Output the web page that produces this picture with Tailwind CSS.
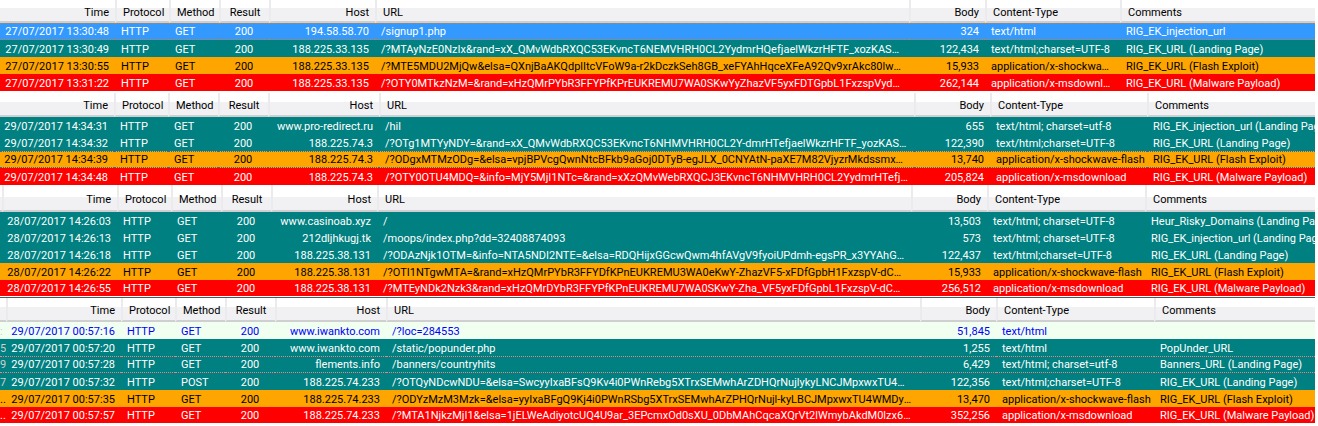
<!DOCTYPE html>
<html lang="en">
<head>
    <meta charset="UTF-8">
    <title>Sessions</title>
    <script src="https://cdn.jsdelivr.net/npm/@tailwindcss/browser@4"></script>
</head>
<body class="bg-white w-[1318px] h-[426px] overflow-hidden font-['Roboto',sans-serif] text-[11px] leading-[17px]">
    <div class="w-[1315px] flex flex-col [&_table]:w-[1315px] [&_table]:table-fixed [&_table]:border-separate [&_table]:border-spacing-0 [&_th]:px-[6px] [&_th]:pt-[3px] [&_th]:font-normal [&_th]:text-left [&_th]:border-b-2 [&_th]:border-b-[#cfcfd2] [&_th]:border-l-2 [&_th]:border-l-[#ebebed] [&_th]:bg-linear-to-t [&_th]:from-[#f1f1f3] [&_th]:from-[13px] [&_th]:to-white [&_th]:to-[13px] [&_td]:h-[17px] [&_td]:p-0 [&_td]:pt-[2px] [&_td]:pl-[6px] [&_td]:pr-[6px] [&_td]:leading-[15px] [&_td]:truncate [&_td.r]:pl-0 [&_td.r]:text-right [&_td.c]:text-center [&_th.r]:text-right [&_th.c]:text-center [&_td:last-child]:pr-0 [&_td:last-child]:[text-overflow:clip] [&_th.e]:p-0 [&_th.e]:border-l-0 [&_td.e]:px-0 [&_td.e]:text-[#cfcfcf]">

        <!-- first capture -->
        <table>
            <colgroup>
                <col class="w-[115px]"><col class="w-[54px]"><col class="w-[50px]"><col class="w-[50px]"><col class="w-[106px]"><col class="w-[534px]"><col class="w-[76px]"><col class="w-[135px]"><col class="w-[195px]">
            </colgroup>
            <thead>
                <tr class="h-[23px]">
                    <th class="r !border-l-0">Time</th><th>Protocol</th><th>Method</th><th class="c">Result</th><th class="r">Host</th><th>URL</th><th class="r">Body</th><th>Content-Type</th><th>Comments</th>
                </tr>
            </thead>
            <tbody>
                <tr class="bg-[#3399ff] text-white [&_td]:border-y [&_td]:border-dotted [&_td]:border-[#c08040] [&_td]:!pt-px [&_td]:!leading-[14px]"><td class="r">27/07/2017 13:30:48</td><td>HTTP</td><td>GET</td><td class="c">200</td><td class="r">194.58.58.70</td><td>/signup1.php</td><td class="r">324</td><td>text/html</td><td>RIG_EK_injection_url</td></tr>
                <tr class="bg-[#008080] text-white"><td class="r">27/07/2017 13:30:49</td><td>HTTP</td><td>GET</td><td class="c">200</td><td class="r">188.225.33.135</td><td>/?MTAyNzE0NzIx&amp;rand=xX_QMvWdbRXQC53EKvncT6NEMVHRH0CL2YydmrHQefjaelWkzrHFTF_xozKASAS3DkT1aaD3kT1</td><td class="r">122,434</td><td>text/html;charset=UTF-8</td><td>RIG_EK_URL (Landing Page)</td></tr>
                <tr class="bg-[#ffa500] text-black"><td class="r">27/07/2017 13:30:55</td><td>HTTP</td><td>GET</td><td class="c">200</td><td class="r">188.225.33.135</td><td>/?MTE5MDU2MjQw&amp;elsa=QXnjBaAKQdplItcVFoW9a-r2kDczkSeh8GB_xeFYAhHqceXFeA92Qv9xrAkc80lwphD3kT1aaD3kT1</td><td class="r">15,933</td><td>application/x-shockwave-flash</td><td>RIG_EK_URL (Flash Exploit)</td></tr>
                <tr class="bg-[#ff0000] text-white"><td class="r">27/07/2017 13:31:22</td><td>HTTP</td><td>GET</td><td class="c">200</td><td class="r">188.225.33.135</td><td>/?OTY0MTkzNzM=&amp;rand=xHzQMrPYbR3FFYPfKPrEUKREMU7WA0SKwYyZhazVF5yxFDTGpbL1FxzspVydCF-D3kT1aaD3kT1aa</td><td class="r">262,144</td><td>application/x-msdownload</td><td>RIG_EK_URL (Malware Payload)</td></tr>
            </tbody>
        </table>

        <!-- second capture -->
        <table class="mt-[2px] [&_td:nth-last-child(2)]:pr-0">
            <colgroup>
                <col class="w-[114px]"><col class="w-[54px]"><col class="w-[50px]"><col class="w-[50px]"><col class="w-[111px]"><col class="w-[535px]"><col class="w-[76px]"><col class="w-[157px]"><col class="w-[168px]">
            </colgroup>
            <thead>
                <tr class="h-[24px]">
                    <th class="r !border-l-0">Time</th><th>Protocol</th><th>Method</th><th class="c">Result</th><th class="r">Host</th><th>URL</th><th class="r">Body</th><th>Content-Type</th><th>Comments</th>
                </tr>
            </thead>
            <tbody>
                <tr class="bg-[#008080] text-white"><td class="r">29/07/2017 14:34:31</td><td>HTTP</td><td>GET</td><td class="c">200</td><td class="r">www.pro-redirect.ru</td><td>/hil</td><td class="r">655</td><td>text/html; charset=utf-8</td><td>RIG_EK_injection_url (Landing Page)</td></tr>
                <tr class="bg-[#008080] text-white"><td class="r">29/07/2017 14:34:32</td><td>HTTP</td><td>GET</td><td class="c">200</td><td class="r">188.225.74.3</td><td>/?OTg1MTYyNDY=&amp;rand=xX_QMvWdbRXQC53EKvncT6NHMVHRH0CL2Y-dmrHTefjaelWkzrHFTF_yozKASwD3kT1aaD3kT1aa</td><td class="r">122,390</td><td>text/html;charset=UTF-8</td><td>RIG_EK_URL (Landing Page)</td></tr>
                <tr class="bg-[#ffa500] text-black [&_td]:border-y [&_td]:border-dotted [&_td]:border-[#3366aa] [&_td]:!pt-px [&_td]:!leading-[14px]"><td class="r">29/07/2017 14:34:39</td><td>HTTP</td><td>GET</td><td class="c">200</td><td class="r">188.225.74.3</td><td>/?ODgxMTMzODg=&amp;elsa=vpjBPVcgQwnNtcBFkb9aGoj0DTyB-egJLX_0CNYAtN-paXE7M82VjyzrMkdssmxxOaD3kT1aaD3kT1</td><td class="r">13,740</td><td>application/x-shockwave-flash</td><td>RIG_EK_URL (Flash Exploit)</td></tr>
                <tr class="bg-[#ff0000] text-white"><td class="r">29/07/2017 14:34:48</td><td>HTTP</td><td>GET</td><td class="c">200</td><td class="r">188.225.74.3</td><td>/?OTY0OTU4MDQ=&amp;info=MjY5MjI1NTc=&amp;rand=xXzQMvWebRXQCJ3EKvncT6NHMVHRH0CL2YydmrHTefjaelWkzrHFD3kT1aaD3kT1aa</td><td class="r">205,824</td><td>application/x-msdownload</td><td>RIG_EK_URL (Malware Payload)</td></tr>
            </tbody>
        </table>

        <!-- third capture -->
        <table class="[&_td:nth-last-child(2)]:pr-0 [&_th]:!pt-[4px]">
            <colgroup>
                <col class="w-[2px]"><col class="w-[115px]"><col class="w-[54px]"><col class="w-[50px]"><col class="w-[50px]"><col class="w-[106px]"><col class="w-[534px]"><col class="w-[76px]"><col class="w-[158px]"><col class="w-[170px]">
            </colgroup>
            <thead>
                <tr class="h-[27px]">
                    <th class="e"></th><th class="r">Time</th><th>Protocol</th><th>Method</th><th class="c">Result</th><th class="r">Host</th><th>URL</th><th class="r">Body</th><th>Content-Type</th><th>Comments</th>
                </tr>
            </thead>
            <tbody>
                <tr class="bg-[#008080] text-white"><td class="e"></td><td class="r">28/07/2017 14:26:03</td><td>HTTP</td><td>GET</td><td class="c">200</td><td class="r">www.casinoab.xyz</td><td>/</td><td class="r">13,503</td><td>text/html; charset=UTF-8</td><td>Heur_Risky_Domains (Landing Page)</td></tr>
                <tr class="bg-[#008080] text-white"><td class="e"></td><td class="r">28/07/2017 14:26:13</td><td>HTTP</td><td>GET</td><td class="c">200</td><td class="r">212dljhkugj.tk</td><td>/moops/index.php?dd=32408874093</td><td class="r">573</td><td>text/html; charset=UTF-8</td><td>RIG_EK_injection_url (Landing Page)</td></tr>
                <tr class="bg-[#008080] text-white"><td class="e"></td><td class="r">28/07/2017 14:26:18</td><td>HTTP</td><td>GET</td><td class="c">200</td><td class="r">188.225.38.131</td><td>/?ODAzNjk1OTM=&amp;info=NTA5NDI2NTE=&amp;elsa=RDQHijxGGcwQwm4hfAVgV9fyoiUPdmh-egsPR_x3YYAhG9kT1aaD3kT1aa</td><td class="r">122,437</td><td>text/html;charset=UTF-8</td><td>RIG_EK_URL (Landing Page)</td></tr>
                <tr class="bg-[#ffa500] text-black"><td class="e"></td><td class="r">28/07/2017 14:26:22</td><td>HTTP</td><td>GET</td><td class="c">200</td><td class="r">188.225.38.131</td><td>/?OTI1NTgwMTA=&amp;rand=xHzQMrPYbR3FFYDfKPnEUKREMU3WA0eKwY-ZhazVF5-xFDfGpbH1FxzspV-dCF-D3kT1aaD3kT1aa</td><td class="r">15,933</td><td>application/x-shockwave-flash</td><td>RIG_EK_URL (Flash Exploit)</td></tr>
                <tr class="bg-[#ff0000] text-white [&_td]:border-b [&_td]:border-b-white [&_td]:!leading-[14px]"><td class="e"></td><td class="r">28/07/2017 14:26:55</td><td>HTTP</td><td>GET</td><td class="c">200</td><td class="r">188.225.38.131</td><td>/?MTEyNDk2Nzk3&amp;rand=xHzQMrDYbR3FFYPfKPnEUKREMU7WA0SKwY-Zha_VF5yxFDfGpbL1FxzspV-dCFyD3kT1aaD3kT1aa</td><td class="r">256,512</td><td>application/x-msdownload</td><td>RIG_EK_URL (Malware Payload)</td></tr>
            </tbody>
        </table>
        <div class="h-px bg-[#555555]"></div>

        <!-- fourth capture -->
        <table class="[&_td:nth-last-child(2)]:pr-0">
            <colgroup>
                <col class="w-[6px]"><col class="w-[115px]"><col class="w-[54px]"><col class="w-[50px]"><col class="w-[50px]"><col class="w-[111px]"><col class="w-[534px]"><col class="w-[76px]"><col class="w-[158px]"><col class="w-[161px]">
            </colgroup>
            <thead>
                <tr class="h-[24px]">
                    <th class="e"></th><th class="r">Time</th><th>Protocol</th><th>Method</th><th class="c">Result</th><th class="r">Host</th><th>URL</th><th class="r">Body</th><th>Content-Type</th><th>Comments</th>
                </tr>
            </thead>
            <tbody>
                <tr class="bg-[#f0fff0] text-[#0000ff]"><td class="e">:</td><td class="r">29/07/2017 00:57:16</td><td>HTTP</td><td>GET</td><td class="c">200</td><td class="r">www.iwankto.com</td><td>/?loc=284553</td><td class="r">51,845</td><td>text/html</td><td></td></tr>
                <tr class="bg-[#008080] text-white"><td class="e">5</td><td class="r">29/07/2017 00:57:20</td><td>HTTP</td><td>GET</td><td class="c">200</td><td class="r">www.iwankto.com</td><td>/static/popunder.php</td><td class="r">1,255</td><td>text/html</td><td>PopUnder_URL</td></tr>
                <tr class="bg-[#008080] text-white [&_td]:border-y [&_td]:border-dotted [&_td]:border-[#f08080] [&_td]:!pt-px [&_td]:!leading-[14px]"><td class="e">9</td><td class="r">29/07/2017 00:57:28</td><td>HTTP</td><td>GET</td><td class="c">200</td><td class="r">flements.info</td><td>/banners/countryhits</td><td class="r">6,429</td><td>text/html; charset=utf-8</td><td>Banners_URL (Landing Page)</td></tr>
                <tr class="bg-[#008080] text-white"><td class="e">7</td><td class="r">29/07/2017 00:57:32</td><td>HTTP</td><td>POST</td><td class="c">200</td><td class="r">188.225.74.233</td><td>/?OTQyNDcwNDU=&amp;elsa=SwcyyIxaBFsQ9Kv4i0PWnRebg5XTrxSEMwhArZDHQrNujlykyLNCJMpxwxTU4W3kT1aaD3kT1aa</td><td class="r">122,356</td><td>text/html;charset=UTF-8</td><td>RIG_EK_URL (Landing Page)</td></tr>
                <tr class="bg-[#ffa500] text-black"><td class="e !text-black">..</td><td class="r">29/07/2017 00:57:35</td><td>HTTP</td><td>GET</td><td class="c">200</td><td class="r">188.225.74.233</td><td>/?ODYzMzM3Mzk=&amp;elsa=yyIxaBFgQ9Kj4i0PWnRSbg5XTrxSEMwhArZPHQrNujl-kyLBCJMpxwxTU4WMDyusD3kT1aaD3kT1</td><td class="r">13,470</td><td>application/x-shockwave-flash</td><td>RIG_EK_URL (Flash Exploit)</td></tr>
                <tr class="bg-[#ff0000] text-white [&_td]:border-b [&_td]:border-b-white [&_td]:!leading-[14px]"><td class="e !text-white">..</td><td class="r">29/07/2017 00:57:57</td><td>HTTP</td><td>GET</td><td class="c">200</td><td class="r">188.225.74.233</td><td>/?MTA1NjkzMjI1&amp;elsa=1jELWeAdiyotcUQ4U9ar_3EPcmxOd0sXU_0DbMAhCqcaXQrVt2lWmybAkdM0lzx6A6D3kT1aaD3kT1</td><td class="r">352,256</td><td>application/x-msdownload</td><td>RIG_EK_URL (Malware Payload)</td></tr>
            </tbody>
        </table>
    </div>
</body>
</html>
